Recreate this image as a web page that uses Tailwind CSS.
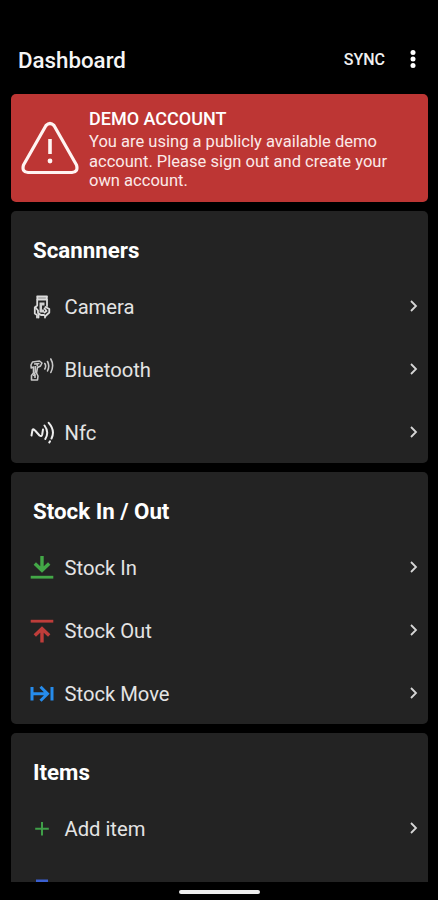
<!DOCTYPE html>
<html lang="en">
<head>
<meta charset="utf-8">
<title>Dashboard</title>
<script src="https://cdn.jsdelivr.net/npm/@tailwindcss/browser@4"></script>
</head>
<body class="bg-black">
<div class="flex h-[900px] w-[438px] flex-col overflow-hidden bg-black font-['Roboto',sans-serif] text-[#e4e4e4]">
  <header class="flex h-[94px] shrink-0 items-center pt-[26px] pl-[18px] pr-[20px]">
    <h1 class="flex-1 pt-px text-[22.3px] font-medium text-[#f5f5f5]">Dashboard</h1>
    <span class="mr-[23px] text-[16px] font-medium text-[#f0f0f0]">SYNC</span>
    <svg class="h-[20px] w-[10px]" viewBox="0 0 10 20" fill="#fff"><circle cx="5" cy="2.500" r="2.500"/><circle cx="5" cy="9" r="2.500"/><circle cx="5" cy="15.500" r="2.500"/></svg>
  </header>
  <main class="flex min-h-0 flex-1 flex-col gap-[9px] overflow-hidden pl-[11px] pr-[10px]">
    <section class="flex h-[108px] shrink-0 rounded-[5px] bg-[#bd3634] pl-[10px] text-[#fbe9e8]">
      <svg class="mt-[27px] h-[54px] w-[58px]" viewBox="0 0 58 54" fill="none" stroke="#fff4f2" stroke-width="3.2" stroke-linecap="round" stroke-linejoin="round"><path d="M25 4.500Q29 0.500 33 4.500L55.500 44Q57.500 51 51 51.500H7Q0.500 51 2.500 44Z"/><path d="M29 18V33" stroke-linecap="butt" stroke-width="3.600"/><circle cx="29" cy="40" r="2.400" fill="#fff4f2" stroke="none"/></svg>
      <div class="pl-[10px] pt-[13px]">
        <h2 class="text-[18px] leading-[24px] font-medium text-white">DEMO ACCOUNT</h2>
        <p class="whitespace-nowrap pt-px text-[16.55px] leading-[19.5px]">You are using a publicly available demo<br>account. Please sign out and create your<br>own account.</p>
      </div>
    </section>
    <section class="h-[252px] shrink-0 rounded-[5px] bg-[#232323]">
      <h2 class="flex h-[64px] items-center pt-[16px] pl-[22px] text-[22.3px] font-bold text-white">Scannners</h2>
      <div class="flex h-[63px] items-center pr-[9px] pl-[19px]">
        <svg class="mr-[10.5px] size-[24px]" viewBox="0 0 24 24" fill="none" stroke="#dcdcdc" stroke-width="1.800" stroke-linecap="round" stroke-linejoin="round"><path d="M7.200 1.500H17L16.500 4.500H7.500Z" fill="#8a8a8a"/><path d="M7.200 4.500V10.500L4.800 12.500V18.500L7 20V22.500M17 4.500V11"/><path d="M9.500 7.500H14.500V10.500H12V14.500H14V17.500H9.500Z" fill="#d0d0d0" stroke="none"/><path d="M5.500 12.500L8 15.500V18L11 20H14M15.500 12L19.300 14V17.500L15 21.500V22.500M14.500 13.500L16.500 16L14.500 17.500M8.500 20V22.500"/></svg>
        <span class="flex-1 pt-[2px] text-[20.2px]">Camera</span>
        <svg class="mb-px h-[14px] w-[10px]" viewBox="0 0 10 14" fill="none" stroke="#d6d6d6" stroke-width="1.800"><path d="M2 2L7 7L2 12"/></svg>
      </div>
      <div class="flex h-[63px] items-center pr-[9px] pl-[19px]">
        <svg class="mr-[10.5px] size-[24px]" viewBox="0 0 24 24" fill="none" stroke="#c8c8c8" stroke-width="1.600" stroke-linejoin="round"><path d="M1 7L2.500 4L9.500 3L12 5L10.500 8L7.500 9.500L6.500 15L8 18L7.500 22H1.500V17.500L3.500 15V9L1.200 10Z"/><path d="M4 6L9.500 5.500M5.300 8V14L3.500 18M5 16V20M7.300 5.500V8.500"/><path d="M14.800 5.500Q16.500 8 14.800 11M17.500 3.500Q20 8 17.500 13M20.800 1Q24.500 7.500 20.800 14.500" stroke-linecap="round"/></svg>
        <span class="flex-1 pt-[2px] text-[20.2px]">Bluetooth</span>
        <svg class="mb-px h-[14px] w-[10px]" viewBox="0 0 10 14" fill="none" stroke="#d6d6d6" stroke-width="1.800"><path d="M2 2L7 7L2 12"/></svg>
      </div>
      <div class="flex h-[63px] items-center pr-[9px] pl-[19px]">
        <svg class="mr-[10.5px] size-[24px]" viewBox="0 0 24 24" fill="none" stroke="#eee" stroke-width="2" stroke-linecap="round" stroke-linejoin="round"><path d="M1.500 14.500L2.500 8.800Q3.500 7.500 5.500 10L9.500 14.500Q11.500 16 12.200 13.500L13 8.500M14.500 4.500Q19.500 11 15.300 18M18.700 1.800Q25.500 9.500 21.500 17.500M20 20.300L19.300 21.500"/></svg>
        <span class="flex-1 pt-[2px] text-[20.2px]">Nfc</span>
        <svg class="mb-px h-[14px] w-[10px]" viewBox="0 0 10 14" fill="none" stroke="#d6d6d6" stroke-width="1.800"><path d="M2 2L7 7L2 12"/></svg>
      </div>
    </section>
    <section class="h-[252px] shrink-0 rounded-[5px] bg-[#232323]">
      <h2 class="flex h-[64px] items-center pt-[16px] pl-[22px] text-[22.3px] font-bold text-white">Stock In / Out</h2>
      <div class="flex h-[63px] items-center pr-[9px] pl-[19px]">
        <svg class="mr-[10.5px] size-[24px]" viewBox="0 0 24 24" fill="none" stroke="#43a847" stroke-width="3"><path d="M12 0V13.500M4.800 7.500L12 14.300L19.200 7.500" stroke-width="3.400"/><path d="M0.700 21.200H23.300" stroke-width="2.800"/></svg>
        <span class="flex-1 pt-[2px] text-[20.2px]">Stock In</span>
        <svg class="mb-px h-[14px] w-[10px]" viewBox="0 0 10 14" fill="none" stroke="#d6d6d6" stroke-width="1.800"><path d="M2 2L7 7L2 12"/></svg>
      </div>
      <div class="flex h-[63px] items-center pr-[9px] pl-[19px]">
        <svg class="mr-[10.5px] size-[24px]" viewBox="0 0 24 24" fill="none" stroke="#be3d3a" stroke-width="3"><path d="M12 23.500V10M4.800 16.500L12 9.700L19.200 16.500" stroke-width="3.400"/><path d="M0.700 2.200H23.300" stroke-width="2.800"/></svg>
        <span class="flex-1 pt-[2px] text-[20.2px]">Stock Out</span>
        <svg class="mb-px h-[14px] w-[10px]" viewBox="0 0 10 14" fill="none" stroke="#d6d6d6" stroke-width="1.800"><path d="M2 2L7 7L2 12"/></svg>
      </div>
      <div class="flex h-[63px] items-center pr-[9px] pl-[19px]">
        <svg class="mr-[10.5px] size-[24px]" viewBox="0 0 24 24" fill="none" stroke="#268cec" stroke-width="3"><path d="M2 5V18.500M22 5V18.500M3 11.800H17M10.500 4.800L17.500 11.800L10.500 18.800"/></svg>
        <span class="flex-1 pt-[2px] text-[20.2px]">Stock Move</span>
        <svg class="mb-px h-[14px] w-[10px]" viewBox="0 0 10 14" fill="none" stroke="#d6d6d6" stroke-width="1.800"><path d="M2 2L7 7L2 12"/></svg>
      </div>
    </section>
    <section class="h-[252px] shrink-0 rounded-[5px] bg-[#232323]">
      <h2 class="flex h-[64px] items-center pt-[16px] pl-[22px] text-[22.3px] font-bold text-white">Items</h2>
      <div class="flex h-[63px] items-center pr-[9px] pl-[19px]">
        <svg class="mr-[10.5px] size-[24px]" viewBox="0 0 24 24" fill="none" stroke="#3f9f48" stroke-width="2"><path d="M12 5V18.500M5.200 11.700H18.800"/></svg>
        <span class="flex-1 pt-[2px] text-[20.2px]">Add item</span>
        <svg class="mb-px h-[14px] w-[10px]" viewBox="0 0 10 14" fill="none" stroke="#d6d6d6" stroke-width="1.800"><path d="M2 2L7 7L2 12"/></svg>
      </div>
      <div class="flex h-[63px] items-center pl-[19px]">
        <svg class="mb-[2px] size-[24px]" viewBox="0 0 24 24" fill="#3a5fd0"><path d="M6 0.500H18V22H6Z"/></svg>
      </div>
    </section>
  </main>
  <footer class="flex h-[18px] shrink-0 justify-center bg-black pt-[8px]"><div class="h-[4px] w-[81px] rounded-full bg-[#eee]"></div></footer>
</div>
</body>
</html>
